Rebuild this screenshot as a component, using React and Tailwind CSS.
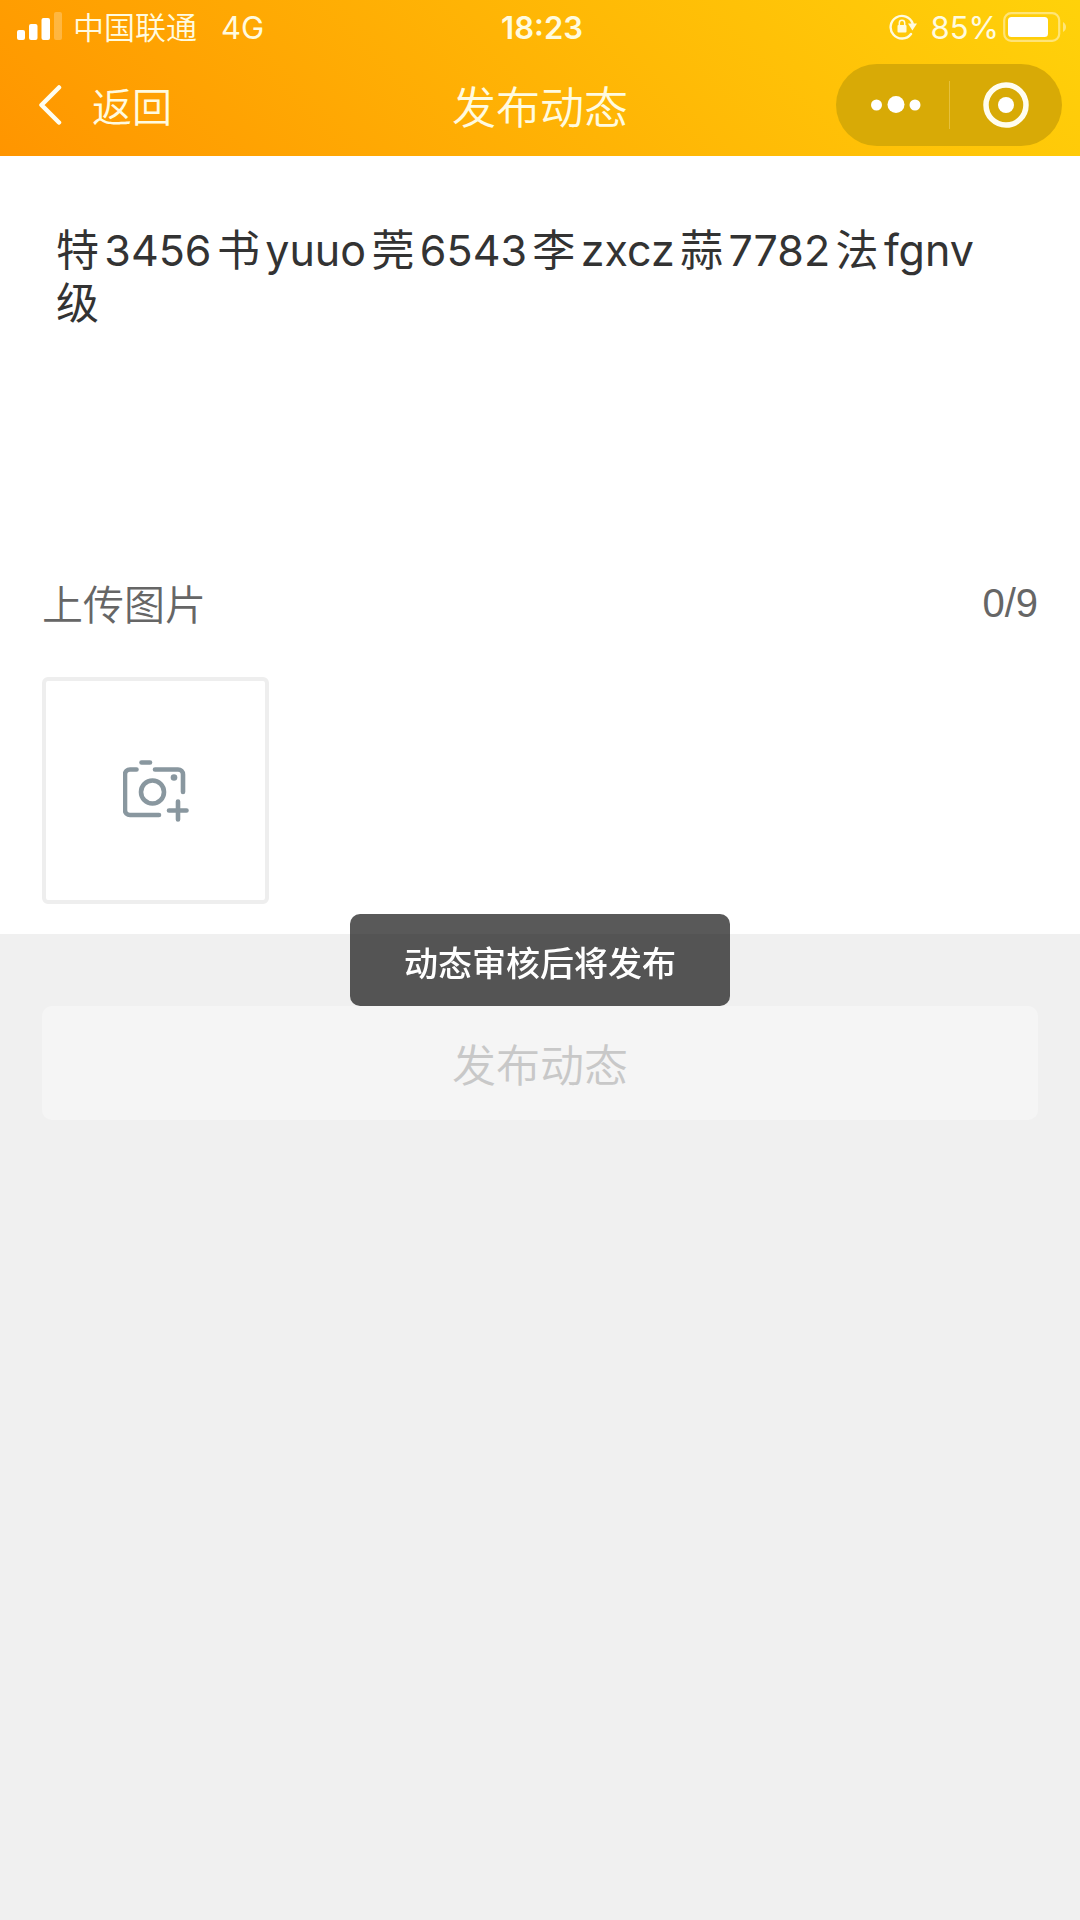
import { useState } from 'react';

const SignalIcon = () => (
  <svg viewBox="0 0 46 30" className="w-[46px] h-[30px]" fill="#fff">
    <rect x="0" y="18" width="8" height="10" rx="2" />
    <rect x="12" y="12" width="8.500" height="16" rx="2" />
    <rect x="24.500" y="6" width="8.500" height="22" rx="2" />
    <rect x="37" y="0" width="8" height="28" rx="2" opacity="0.25" />
  </svg>
);

const RotationLockIcon = () => (
  <svg viewBox="0 0 28 26" className="w-[28px] h-[26px]" fill="none">
    <path d="M22 20A11.3 11.3 0 1 1 23.6 9.5" stroke="#fffbe0" strokeWidth="2.4" strokeLinecap="round" />
    <path d="M19 9.5h9l-4.6 7z" fill="#fffbe0" />
    <rect x="8.5" y="11" width="9" height="7.5" rx="1" fill="#fffbe0" />
    <path d="M10.3 11V9a2.7 2.7 0 0 1 5.4 0v2" stroke="#fffbe0" strokeWidth="1.5" />
  </svg>
);

const BatteryIcon = () => (
  <svg viewBox="0 0 64 30" className="w-[64px] h-[30px]" fill="none">
    <rect x="1.2" y="1.2" width="55" height="27.6" rx="7" stroke="#fff" strokeWidth="2.2" opacity="0.45" />
    <rect x="5" y="5" width="40" height="20" rx="3.5" fill="#fff" />
    <path d="M60 10c4 2 4 8 0 10z" fill="#fff" opacity="0.45" />
  </svg>
);

const BackIcon = () => (
  <svg viewBox="0 0 24 42" className="w-[24px] h-[42px]" fill="none">
    <path d="M21 3.500 3.500 21 21 38.500" stroke="#fffef0" strokeWidth="4.500" strokeLinecap="round" strokeLinejoin="round" />
  </svg>
);

const MoreIcon = () => (
  <svg viewBox="0 0 50 18" className="w-[50px] h-[18px]" fill="#fff">
    <circle cx="5.500" cy="9" r="5.500" />
    <circle cx="25" cy="8.500" r="8.500" />
    <circle cx="44" cy="9" r="5.500" />
  </svg>
);

const TargetIcon = () => (
  <svg viewBox="0 0 46 46" className="w-[46px] h-[46px]" fill="none">
    <circle cx="23" cy="23" r="20" stroke="#fffdf0" strokeWidth="5.500" />
    <circle cx="23" cy="23" r="8" fill="#fff" />
  </svg>
);

const CameraPlusIcon = () => (
  <svg viewBox="0 0 66 62" className="w-[66px] h-[62px]" fill="none" stroke="#89979f" strokeWidth="4.600" strokeLinecap="round">
    <path d="M18.500 2.500h8.500" />
    <path d="M13.500 9.500H7a5 5 0 0 0-5 5V50a5 5 0 0 0 5 5h29" />
    <path d="M32 9.500h23a5 5 0 0 1 5 5V32" />
    <circle cx="29.500" cy="32" r="11.500" />
    <circle cx="51" cy="17.500" r="3.300" fill="#89979f" stroke="none" />
    <path d="M46 50.500h17.500M55 41.500v18" />
  </svg>
);

const App = () => {
  const [content, setContent] = useState('特3456书yuuo莞6543李zxcz蒜7782法fgnv级');

  return (
    <div className="min-h-screen bg-[#f0f0f0] font-['Noto_Sans_CJK_SC',sans-serif]">
      <header className="bg-linear-45 from-[#ff9500] via-[#ffb405] to-[#ffd20a] text-[#fffbe0]">
        <div className="grid grid-cols-3 items-center h-[54px] pl-[17px] pr-[13px] font-['Inter','Noto_Sans_CJK_SC',sans-serif] text-[31px] leading-none">
          <div className="flex items-center">
            <SignalIcon />
            <span className="ml-2.5 font-[350]">中国联通</span>
            <span className="ml-6">4G</span>
          </div>
          <time className="text-center font-semibold">18:23</time>
          <div className="flex items-center justify-end">
            <RotationLockIcon />
            <span className="ml-3.5 mr-1">85%</span>
            <BatteryIcon />
          </div>
        </div>
        <nav className="grid grid-cols-3 items-center h-[102px]">
          <button type="button" className="flex items-center gap-[30px] justify-self-start ml-[38px] text-[40px] leading-none font-[350]">
            <BackIcon />
            返回
          </button>
          <h1 className="text-center text-[44px] leading-none font-[350]">发布动态</h1>
          <div className="flex items-center justify-self-end w-[226px] h-[82px] mr-[18px] rounded-full bg-[#d8aa06]">
            <button type="button" aria-label="更多" className="flex items-center justify-center w-[113px] pl-1.5">
              <MoreIcon />
            </button>
            <span className="w-px h-12 bg-[#e6c13c]" />
            <button type="button" aria-label="关闭" className="flex flex-1 items-center justify-center">
              <TargetIcon />
            </button>
          </div>
        </nav>
      </header>

      <main>
        <section className="bg-white px-[42px] pt-[68px] pb-[30px]">
          <textarea
            value={content}
            onChange={(e) => setContent(e.target.value)}
            aria-label="动态内容"
            className="block w-full h-[320px] pl-3.5 pr-8 resize-none outline-none font-['Inter','Noto_Sans_CJK_SC',sans-serif] text-[43px] leading-[53px] text-[#333] [text-autospace:normal]"
          />
          <div className="flex items-center justify-between h-[117px] text-[40px] leading-none text-[#666]">
            <h2 className="text-[41px] font-[350]">上传图片</h2>
            <span className="font-['Liberation_Sans',sans-serif]">0/9</span>
          </div>
          <button
            type="button"
            aria-label="添加图片"
            className="flex items-center justify-center mt-4 size-[227px] rounded-md border-4 border-[#eee]"
          >
            <CameraPlusIcon />
          </button>
        </section>

        <div className="px-[42px] pt-[72px]">
          <button type="button" disabled className="w-full h-[114px] rounded-[10px] bg-[#f5f5f5] text-[44px] leading-none font-[350] text-[#c8c8c8]">
            发布动态
          </button>
        </div>
      </main>

      <div
        role="status"
        className="fixed top-1/2 left-1/2 -translate-x-1/2 -translate-y-1/2 px-[54px] pt-[22px] pb-[18px] rounded-[10px] bg-black/65 text-[34px] leading-[52px] font-medium whitespace-nowrap text-white"
      >
        动态审核后将发布
      </div>
    </div>
  );
};

export default App;
